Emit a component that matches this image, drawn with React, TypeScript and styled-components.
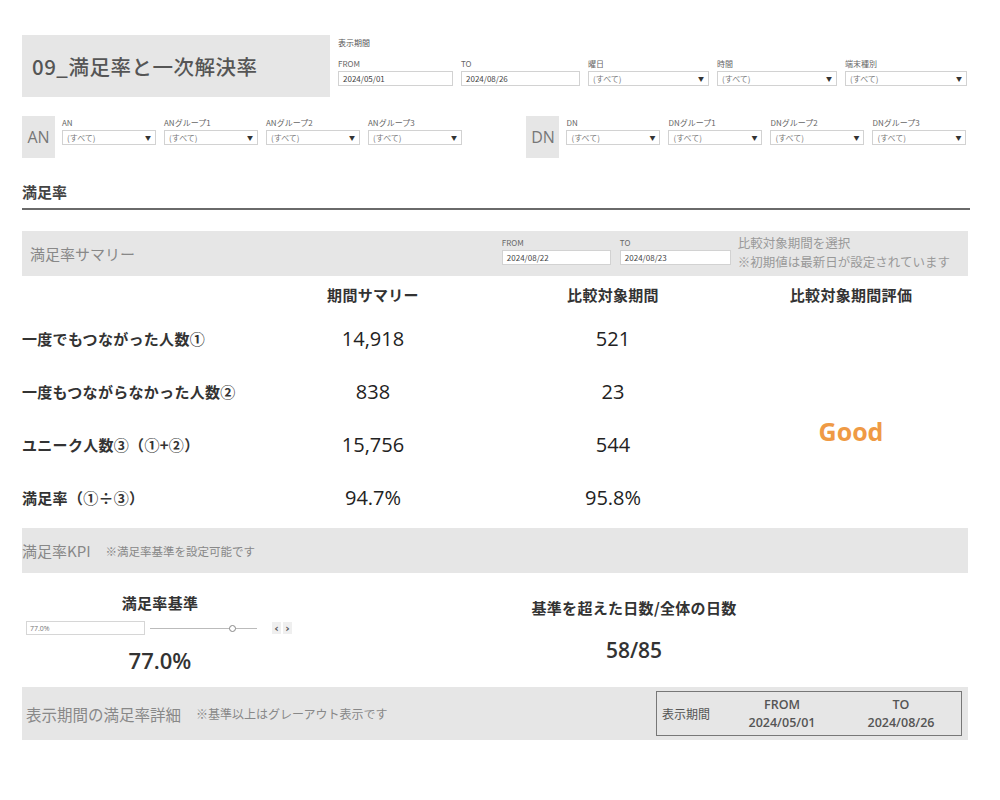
import React from "react";
import styled, { createGlobalStyle } from "styled-components";

const Global = createGlobalStyle`
  html, body { margin: 0; padding: 0; background: #fff; }
  body { font-family: "Noto Sans CJK JP", "Open Sans", sans-serif; color: #333; }
`;

const JP = `"Noto Sans CJK JP", sans-serif`;
const NUM = `"Open Sans", "Noto Sans CJK JP", sans-serif`;

const Page = styled.div`
  width: 1000px;
  height: 800px;
  box-sizing: border-box;
  padding: 35px 30px 0 22px;
  display: flex;
  flex-direction: column;
`;

const HeaderRow = styled.div`
  display: flex;
  gap: 8px;
  align-items: flex-start;
`;

const TitleBox = styled.div`
  width: 308px;
  height: 62px;
  background: #e6e6e6;
  display: flex;
  align-items: center;
  padding-left: 10px;
  box-sizing: border-box;
  font-family: ${JP};
  font-size: 20.5px;
  font-weight: 500;
  color: #555;
  letter-spacing: 0.5px;
`;

const FilterCol = styled.div`
  display: flex;
  flex-direction: column;
  padding-top: 2px;
`;

const GroupLabel = styled.div`
  font-family: ${JP};
  font-size: 8px;
  color: #555;
  height: 12px;
  line-height: 12px;
  margin-bottom: 9px;
`;

const FieldRow = styled.div<{ $gap: number }>`
  display: flex;
  gap: ${(p) => p.$gap}px;
  align-items: flex-end;
`;

const FieldWrap = styled.div<{ $w: number }>`
  width: ${(p) => p.$w}px;
  display: flex;
  flex-direction: column;
`;

const FieldLabel = styled.div`
  font-family: ${JP};
  font-size: 8px;
  color: #666;
  height: 12px;
  line-height: 12px;
  margin-bottom: 1px;
`;

const Control = styled.div`
  height: 15px;
  border: 1px solid #d2d2d2;
  box-sizing: border-box;
  background: #fff;
  display: flex;
  align-items: center;
  justify-content: space-between;
  padding: 0 4px;
  font-family: ${JP};
  font-size: 8px;
  color: #444;
`;

const SelectText = styled.span`
  color: #777;
`;

const Caret = styled.span`
  font-size: 6px;
  color: #333;
`;

const Field = ({ label, value, w, select }: { label: string; value: string; w: number; select?: boolean }) => (
  <FieldWrap $w={w}>
    <FieldLabel>{label}</FieldLabel>
    <Control>
      {select ? <SelectText>{value}</SelectText> : <span>{value}</span>}
      {select && <Caret>▼</Caret>}
    </Control>
  </FieldWrap>
);

const GroupRow = styled.div`
  display: flex;
  margin-top: 19px;
  height: 42px;
`;

const Group = styled.div<{ $w: number }>`
  width: ${(p) => p.$w}px;
  display: flex;
  align-items: flex-start;
  gap: 7px;
`;

const TagBox = styled.div`
  width: 33px;
  height: 42px;
  background: #e6e6e6;
  display: flex;
  align-items: center;
  justify-content: center;
  font-family: "Open Sans", sans-serif;
  font-size: 16px;
  color: #777;
`;

const GroupFields = styled.div`
  display: flex;
  gap: 8px;
  padding-top: 1px;
`;

const SectionTitle = styled.div`
  margin-top: 23px;
  font-family: ${JP};
  font-size: 15px;
  font-weight: 700;
  color: #444;
  height: 22px;
  line-height: 22px;
  padding-bottom: 5px;
  border-bottom: 2px solid #6a6a6a;
  width: 948px;
`;

const GrayBar = styled.div<{ $h: number; $mt: number }>`
  width: 946px;
  height: ${(p) => p.$h}px;
  margin-top: ${(p) => p.$mt}px;
  background: #e6e6e6;
  display: flex;
  align-items: center;
  box-sizing: border-box;
  flex-shrink: 0;
`;

const BarTitle = styled.div<{ $size: number; $pl: number }>`
  font-family: ${JP};
  font-size: ${(p) => p.$size}px;
  color: #888;
  padding-left: ${(p) => p.$pl}px;
  white-space: nowrap;
`;

const BarNote = styled.div<{ $ml: number; $size: number }>`
  font-family: ${JP};
  font-size: ${(p) => p.$size}px;
  color: #888;
  margin-left: ${(p) => p.$ml}px;
  white-space: nowrap;
`;

const BarSpacer = styled.div`
  flex: 1;
`;

const CompareFields = styled.div`
  display: flex;
  gap: 9px;
  margin-bottom: 6px;
`;

const CompareNote = styled.div`
  font-family: ${JP};
  font-size: 12.5px;
  line-height: 19px;
  color: #999;
  margin-left: 7px;
  margin-right: 18px;
  align-self: flex-start;
  margin-top: 2px;
  white-space: nowrap;
`;

const Table = styled.div`
  display: grid;
  grid-template-columns: 231px 240px 240px 236px;
  grid-template-rows: 36px repeat(4, 53px);
  width: 947px;
`;

const HeadCell = styled.div`
  display: flex;
  align-items: center;
  justify-content: center;
  font-family: ${JP};
  font-size: 15px;
  font-weight: 700;
  color: #333;
  letter-spacing: 0.3px;
`;

const RowLabel = styled.div`
  display: flex;
  align-items: center;
  font-family: ${JP};
  font-size: 15px;
  font-weight: 700;
  color: #333;
  letter-spacing: 0.3px;
`;

const ValueCell = styled.div`
  display: flex;
  align-items: center;
  justify-content: center;
  font-family: ${NUM};
  font-size: 20px;
  color: #222;
`;

const GoodCell = styled.div`
  grid-column: 4;
  grid-row: 2 / span 4;
  display: flex;
  justify-content: center;
  align-items: flex-start;
  padding-top: 102px;
  font-family: ${NUM};
  font-size: 25px;
  font-weight: 700;
  color: #ef9a45;
`;

const KpiArea = styled.div`
  display: grid;
  grid-template-columns: 276px 672px;
  height: 114px;
`;

const KpiLeft = styled.div`
  display: flex;
  flex-direction: column;
  align-items: center;
  padding-top: 20px;
`;

const KpiRight = styled.div`
  display: flex;
  flex-direction: column;
  align-items: center;
  padding-top: 25px;
`;

const KpiHead = styled.div`
  font-family: ${JP};
  font-size: 15px;
  font-weight: 700;
  color: #333;
  line-height: 20px;
  letter-spacing: 0.3px;
`;

const SliderRow = styled.div`
  align-self: stretch;
  display: flex;
  align-items: center;
  padding-left: 4px;
  margin-top: 8px;
  height: 14px;
`;

const SliderInput = styled.div`
  width: 119px;
  height: 14px;
  border: 1px solid #d6d6d6;
  box-sizing: border-box;
  font-family: ${NUM};
  font-size: 7px;
  color: #777;
  padding-left: 3px;
  display: flex;
  align-items: center;
`;

const Track = styled.div`
  position: relative;
  width: 107px;
  height: 1px;
  background: #bbb;
  margin-left: 5px;
`;

const Thumb = styled.div`
  position: absolute;
  top: -3px;
  left: 79px;
  width: 5px;
  height: 5px;
  border: 1px solid #888;
  border-radius: 50%;
  background: #fff;
`;

const Arrows = styled.div`
  display: flex;
  gap: 2px;
  margin-left: 15px;
`;

const ArrowBtn = styled.div`
  width: 9px;
  height: 12px;
  background: #efefef;
  display: flex;
  align-items: center;
  justify-content: center;
  font-family: "DejaVu Sans", sans-serif;
  font-size: 11px;
  font-weight: 700;
  color: #555;
  line-height: 1;
`;

const BigValue = styled.div<{ $mt: number; $size: number }>`
  font-family: ${NUM};
  font-size: ${(p) => p.$size}px;
  font-weight: 600;
  color: #333;
  margin-top: ${(p) => p.$mt}px;
`;

const PeriodBox = styled.div`
  margin-left: auto;
  margin-right: 6px;
  width: 306px;
  height: 45px;
  border: 1px solid #777;
  box-sizing: border-box;
  display: grid;
  grid-template-columns: 66px 118px 1fr;
  align-items: center;
`;

const PeriodLabel = styled.div`
  font-family: ${JP};
  font-size: 12px;
  color: #555;
  padding-left: 5px;
`;

const PeriodCell = styled.div`
  display: flex;
  flex-direction: column;
  align-items: center;
  font-family: ${NUM};
  font-size: 12.5px;
  font-weight: 600;
  color: #555;
  line-height: 18px;
`;

const anFields = ["AN", "ANグループ1", "ANグループ2", "ANグループ3"];
const dnFields = ["DN", "DNグループ1", "DNグループ2", "DNグループ3"];

const rows = [
  { label: "一度でもつながった人数①", a: "14,918", b: "521" },
  { label: "一度もつながらなかった人数②", a: "838", b: "23" },
  { label: "ユニーク人数③（①+②）", a: "15,756", b: "544" },
  { label: "満足率（①÷③）", a: "94.7%", b: "95.8%" },
];

export default function App() {
  return (
    <>
      <Global />
      <Page>
        <HeaderRow>
          <TitleBox>09_満足率と一次解決率</TitleBox>
          <FilterCol>
            <GroupLabel>表示期間</GroupLabel>
            <FieldRow $gap={8}>
              <Field label="FROM" value="2024/05/01" w={115} />
              <Field label="TO" value="2024/08/26" w={119} />
              <Field label="曜日" value="(すべて)" w={121} select />
              <Field label="時間" value="(すべて)" w={120} select />
              <Field label="端末種別" value="(すべて)" w={122} select />
            </FieldRow>
          </FilterCol>
        </HeaderRow>

        <GroupRow>
          <Group $w={505}>
            <TagBox>AN</TagBox>
            <GroupFields>
              {anFields.map((f) => (
                <Field key={f} label={f} value="(すべて)" w={94} select />
              ))}
            </GroupFields>
          </Group>
          <Group $w={444}>
            <TagBox>DN</TagBox>
            <GroupFields>
              {dnFields.map((f) => (
                <Field key={f} label={f} value="(すべて)" w={94} select />
              ))}
            </GroupFields>
          </Group>
        </GroupRow>

        <SectionTitle>満足率</SectionTitle>

        <GrayBar $h={45} $mt={21}>
          <BarTitle $size={15} $pl={8}>満足率サマリー</BarTitle>
          <BarSpacer />
          <CompareFields>
            <Field label="FROM" value="2024/08/22" w={109} />
            <Field label="TO" value="2024/08/23" w={111} />
          </CompareFields>
          <CompareNote>
            比較対象期間を選択
            <br />
            ※初期値は最新日が設定されています
          </CompareNote>
        </GrayBar>

        <Table>
          <div />
          <HeadCell>期間サマリー</HeadCell>
          <HeadCell>比較対象期間</HeadCell>
          <HeadCell>比較対象期間評価</HeadCell>
          {rows.map((r, i) => (
            <React.Fragment key={r.label}>
              <RowLabel style={{ gridRow: i + 2, gridColumn: 1 }}>{r.label}</RowLabel>
              <ValueCell style={{ gridRow: i + 2, gridColumn: 2 }}>{r.a}</ValueCell>
              <ValueCell style={{ gridRow: i + 2, gridColumn: 3 }}>{r.b}</ValueCell>
            </React.Fragment>
          ))}
          <GoodCell>Good</GoodCell>
        </Table>

        <GrayBar $h={45} $mt={4}>
          <BarTitle $size={15} $pl={0}>満足率KPI</BarTitle>
          <BarNote $ml={15} $size={11.5}>※満足率基準を設定可能です</BarNote>
        </GrayBar>

        <KpiArea>
          <KpiLeft>
            <KpiHead>満足率基準</KpiHead>
            <SliderRow>
              <SliderInput>77.0%</SliderInput>
              <Track>
                <Thumb />
              </Track>
              <Arrows>
                <ArrowBtn>‹</ArrowBtn>
                <ArrowBtn>›</ArrowBtn>
              </Arrows>
            </SliderRow>
            <BigValue $mt={10} $size={22}>77.0%</BigValue>
          </KpiLeft>
          <KpiRight>
            <KpiHead>基準を超えた日数/全体の日数</KpiHead>
            <BigValue $mt={18} $size={21}>58/85</BigValue>
          </KpiRight>
        </KpiArea>

        <GrayBar $h={53} $mt={0}>
          <BarTitle $size={15.5} $pl={4}>表示期間の満足率詳細</BarTitle>
          <BarNote $ml={15} $size={12}>※基準以上はグレーアウト表示です</BarNote>
          <PeriodBox>
            <PeriodLabel>表示期間</PeriodLabel>
            <PeriodCell>
              <span>FROM</span>
              <span>2024/05/01</span>
            </PeriodCell>
            <PeriodCell>
              <span>TO</span>
              <span>2024/08/26</span>
            </PeriodCell>
          </PeriodBox>
        </GrayBar>
      </Page>
    </>
  );
}
